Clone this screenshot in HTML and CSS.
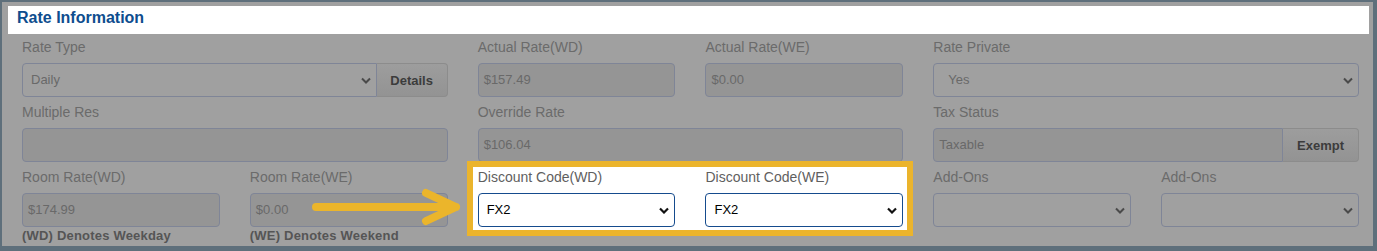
FILE: index.html
```html
<!DOCTYPE html>
<html lang="en">
  <head>
    <meta charset="UTF-8" />
    <title>Rate Information</title>
    <link rel="stylesheet" href="styles.css">
  </head>
  <body>
    <div class="panel">
      <h2 class="panel-title">Rate Information</h2>
      <div class="grid">
        <!-- row 1 -->
        <div class="field">
          <label>Rate Type</label>
          <div class="group">
            <div class="select">
              <span>Daily</span>
              <svg class="chev" width="10" height="7" viewBox="0 0 10 7"><path d="M1 1.5l4 4 4-4" /></svg>
            </div>
            <button class="btn btn-details">Details</button>
          </div>
        </div>
        <div class="pair">
          <div class="field">
            <label>Actual Rate(WD)</label>
            <div class="input disabled">$157.49</div>
          </div>
          <div class="field">
            <label>Actual Rate(WE)</label>
            <div class="input disabled">$0.00</div>
          </div>
        </div>
        <div class="field">
          <label>Rate Private</label>
          <div class="select wide-pad">
            <span>Yes</span>
            <svg class="chev" width="10" height="7" viewBox="0 0 10 7"><path d="M1 1.5l4 4 4-4" /></svg>
          </div>
        </div>

        <!-- row 2 -->
        <div class="field">
          <label>Multiple Res</label>
          <div class="input disabled"></div>
        </div>
        <div class="field">
          <label>Override Rate</label>
          <div class="input disabled">$106.04</div>
        </div>
        <div class="field">
          <label>Tax Status</label>
          <div class="group">
            <div class="input disabled">Taxable</div>
            <button class="btn btn-exempt">Exempt</button>
          </div>
        </div>

        <!-- row 3 -->
        <div class="pair">
          <div class="field">
            <label>Room Rate(WD)</label>
            <div class="input disabled">$174.99</div>
            <p class="note">(WD) Denotes Weekday</p>
          </div>
          <div class="field">
            <label>Room Rate(WE)</label>
            <div class="input disabled">$0.00</div>
            <p class="note">(WE) Denotes Weekend</p>
          </div>
        </div>
        <div class="pair highlight">
          <div class="field">
            <label>Discount Code(WD)</label>
            <div class="select">
              <span>FX2</span>
              <svg class="chev" width="10" height="7" viewBox="0 0 10 7"><path d="M1 1.5l4 4 4-4" /></svg>
            </div>
          </div>
          <div class="field">
            <label>Discount Code(WE)</label>
            <div class="select">
              <span>FX2</span>
              <svg class="chev" width="10" height="7" viewBox="0 0 10 7"><path d="M1 1.5l4 4 4-4" /></svg>
            </div>
          </div>
        </div>
        <div class="pair">
          <div class="field">
            <label>Add-Ons</label>
            <div class="select">
              <span></span>
              <svg class="chev" width="10" height="7" viewBox="0 0 10 7"><path d="M1 1.5l4 4 4-4" /></svg>
            </div>
          </div>
          <div class="field">
            <label>Add-Ons</label>
            <div class="select">
              <span></span>
              <svg class="chev" width="10" height="7" viewBox="0 0 10 7"><path d="M1 1.5l4 4 4-4" /></svg>
            </div>
          </div>
        </div>
      </div>

      <svg class="arrow" width="156" height="40" viewBox="0 0 156 40">
        <path d="M6 19H146M116 5L146 19L116 33" />
      </svg>
    </div>
  </body>
</html>
```

FILE: styles.css
```css
html,
body {
  margin: 0;
  padding: 0;
}
body {
  font-family: "Liberation Sans", Arial, Helvetica, sans-serif;
  background: #a0a0a0;
}
.panel {
  position: relative;
  box-sizing: border-box;
  width: 1377px;
  height: 251px;
  padding: 4px 4px 0 6px;
  border-style: solid;
  border-color: #5e6f7b;
  border-width: 2px 4px 5px 2px;
  background: #a0a0a0;
  overflow: hidden;
}
.panel-title {
  margin: 0;
  height: 28px;
  padding: 2px 0 0 9px;
  box-sizing: border-box;
  background: #fff;
  font-size: 16px;
  line-height: 20px;
  font-weight: bold;
  color: #0e4d8e;
}
.grid {
  display: grid;
  grid-template-columns: repeat(3, 1fr);
  column-gap: 30px;
  row-gap: 6px;
  margin-top: 4px;
  padding-left: 14px;
  width: 1337px;
}
.pair {
  display: grid;
  grid-template-columns: 1fr 1fr;
  column-gap: 30px;
}
.field label {
  display: block;
  font-size: 14px;
  line-height: 18px;
  margin-bottom: 7px;
  color: #6b6b6b;
}
.group {
  display: flex;
}
.group > .select,
.group > .input {
  flex: 1;
  border-top-right-radius: 0;
  border-bottom-right-radius: 0;
}
.input,
.select {
  box-sizing: border-box;
  height: 34px;
  border: 1px solid #7f8597;
  border-radius: 4px;
  font-size: 13px;
  line-height: 32px;
  color: #696969;
}
.input {
  padding-left: 5px;
  background: #959595;
}
.select {
  display: flex;
  align-items: center;
  justify-content: space-between;
  padding: 0 5px 0 8px;
  background: #a0a0a0;
}
.select.wide-pad {
  padding-left: 14px;
}
.chev path {
  fill: none;
  stroke: #4a4a4a;
  stroke-width: 2;
}
.btn {
  box-sizing: border-box;
  height: 34px;
  border: 1px solid #8c8c8c;
  border-left: none;
  border-radius: 0 4px 4px 0;
  background: linear-gradient(#9d9d9d, #939393);
  font-family: inherit;
  font-size: 13px;
  font-weight: bold;
  color: #3c3c3c;
  padding: 0;
}
.btn-details {
  width: 71px;
}
.btn-exempt {
  width: 76px;
}
.note {
  margin: 1px 0 0;
  font-size: 13px;
  line-height: 16px;
  font-weight: bold;
  color: #555;
  letter-spacing: 0.2px;
}
.highlight {
  align-self: start;
  margin: -1px -4px 0 -5px;
  padding: 1px 4px 3px 5px;
  background: #fff;
  box-shadow: 0 0 0 6px #ebb42c;
}
.highlight .field label {
  color: #5f5f5f;
}
.highlight .select {
  background: #fff;
  border-color: #154b8d;
  color: #000;
}
.highlight .chev path {
  stroke: #111;
  stroke-width: 2.2;
}
.arrow {
  position: absolute;
  left: 308px;
  top: 186px;
}
.arrow path {
  fill: none;
  stroke: #ebb52b;
  stroke-width: 8;
  stroke-linecap: round;
  stroke-linejoin: round;
}
```
